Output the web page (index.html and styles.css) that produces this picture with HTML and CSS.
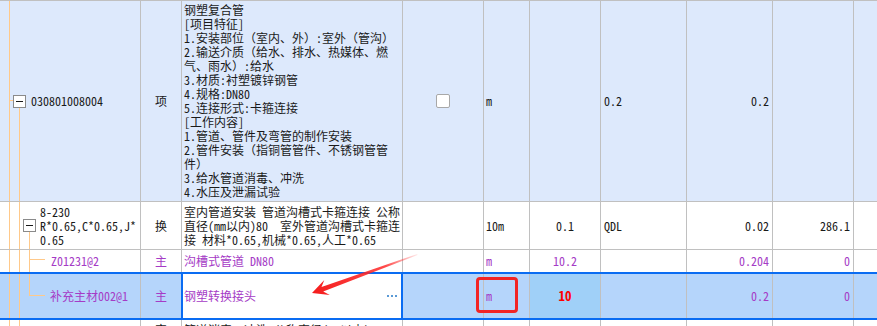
FILE: index.html
```html
<!DOCTYPE html>
<html lang="zh-CN">
<head>
<meta charset="utf-8">
<title>清单</title>
<link rel="stylesheet" href="styles.css">
</head>
<body>
<div class="page">
  <div class="grid">
    <div class="row row1">
      <div class="cell code t1"><span class="tog"></span><span class="codetxt">030801008004</span></div>
      <div class="cell c">项</div>
      <div class="cell desc">钢塑复合管<br>[项目特征]<br>1.安装部位（室内、外）:室外（管沟）<br>2.输送介质（给水、排水、热媒体、燃<br>气、雨水）:给水<br>3.材质:衬塑镀锌钢管<br>4.规格:DN80<br>5.连接形式:卡箍连接<br>[工作内容]<br>1.管道、管件及弯管的制作安装<br>2.管件安装（指铜管管件、不锈钢管管<br>件）<br>3.给水管道消毒、冲洗<br>4.水压及泄漏试验</div>
      <div class="cell c"><span class="chk"></span></div>
      <div class="cell unit">m</div>
      <div class="cell c"></div>
      <div class="cell">0.2</div>
      <div class="cell r">0.2</div>
      <div class="cell"></div>
      <div class="cell last"></div>
    </div>
    <div class="row row2">
      <div class="cell code t2"><span class="tog"></span><span class="codetxt">8-230<br>R*0.65,C*0.65,J*<br>0.65</span></div>
      <div class="cell c">换</div>
      <div class="cell desc">室内管道安装 管道沟槽式卡箍连接 公称<br>直径(mm以内)80　室外管道沟槽式卡箍连<br>接 材料*0.65,机械*0.65,人工*0.65</div>
      <div class="cell"></div>
      <div class="cell unit">10m</div>
      <div class="cell c">0.1</div>
      <div class="cell">QDL</div>
      <div class="cell r">0.02</div>
      <div class="cell r">286.1</div>
      <div class="cell last"></div>
    </div>
    <div class="row row3 purple">
      <div class="cell code t3">Z01231@2</div>
      <div class="cell c">主</div>
      <div class="cell desc">沟槽式管道 DN80</div>
      <div class="cell"></div>
      <div class="cell unit">m</div>
      <div class="cell c">10.2</div>
      <div class="cell"></div>
      <div class="cell r">0.204</div>
      <div class="cell r">0</div>
      <div class="cell last"></div>
    </div>
    <div class="row row4 purple">
      <div class="cell code t4">补充主材002@1</div>
      <div class="cell c before-edit">主</div>
      <div class="cell desc edit"><span>钢塑转换接头</span><span class="dots"></span></div>
      <div class="cell"></div>
      <div class="cell unit marked">m<span class="redbox"></span></div>
      <div class="cell c qsel"><b class="qty">10</b></div>
      <div class="cell"></div>
      <div class="cell r">0.2</div>
      <div class="cell r">0</div>
      <div class="cell last"></div>
    </div>
    <div class="row row5">
      <div class="cell code t5">8-141</div>
      <div class="cell c">定</div>
      <div class="cell desc">管道消毒、冲洗 公称直径(mm以内)100</div>
      <div class="cell"></div>
      <div class="cell unit">100m</div>
      <div class="cell c">0.01</div>
      <div class="cell">QDL</div>
      <div class="cell r">0.002</div>
      <div class="cell r">100.00</div>
      <div class="cell last"></div>
    </div>
  </div>
  <svg class="arrow" width="877" height="326" viewBox="0 0 877 326">
    <defs>
      <linearGradient id="fade" x1="417" y1="254" x2="312" y2="293" gradientUnits="userSpaceOnUse">
        <stop offset="0" stop-color="#ff3030" stop-opacity="0.1"/>
        <stop offset="0.3" stop-color="#ff2a2a" stop-opacity="0.85"/>
        <stop offset="1" stop-color="#f41c1c"/>
      </linearGradient>
    </defs>
    <polygon fill="url(#fade)" points="312,293 324.3,280 321.5,286.9 417.2,254 417.6,255.1 323.2,291.6 329.8,295.1"/>
  </svg>
</div>
</body>
</html>
```
FILE: styles.css
```css
* { box-sizing: border-box; }
html, body { margin: 0; padding: 0; }
body {
  width: 877px;
  height: 326px;
  overflow: hidden;
  background: #fff;
  font-family: "Noto Sans Mono CJK SC", "Noto Sans CJK SC", sans-serif;
  font-size: 12px;
  color: #1a1a1a;
}
.page { position: relative; width: 877px; height: 326px; }
.grid { border-top: 1px solid #c0c0c0; }
.row {
  display: grid;
  grid-template-columns: 141px 41px 221px 81px 46px 71px 86px 86px 81px 1fr;
  border-bottom: 1px solid #c0c0c0;
}
.cell {
  border-right: 1px solid #c0c0c0;
  display: flex;
  align-items: center;
  padding: 0 3px;
  line-height: 14px;
  white-space: nowrap;
  overflow: hidden;
}
.cell.last { border-right: none; }
.r { justify-content: flex-end; }
.c { justify-content: center; }
.desc { padding-left: 2px; }
.unit { padding-left: 2px; }

.row1 { height: 201px; background: #dde9fc; }
.row2 { height: 48px; }
.row3 { height: 22px; border-bottom: none; }
.row4 {
  height: 48px;
  border-top: 2px solid #0a6cf2;
  border-bottom: 2px solid #0a6cf2;
  background: #b5d5fb;
}
.row5 { height: 30px; border-bottom: none; }
.row5 .cell { align-items: flex-start; padding-top: 3px; }

.purple { color: #a53bc6; }

/* tree column */
.code { padding-left: 0; }
.t1 {
  padding-left: 13px;
  background:
    linear-gradient(#ffc98a, #ffc98a) 9px 0 / 1px 100% no-repeat,
    linear-gradient(#ffc98a, #ffc98a) 9px 99px / 5px 1px no-repeat,
    linear-gradient(#ffc98a, #ffc98a) 19px 106px / 1px 100% no-repeat;
}
.t1 .codetxt { margin-left: 5px; }
.t2 {
  padding-left: 23px;
  background:
    linear-gradient(#ffc98a, #ffc98a) 9px 0 / 1px 100% no-repeat,
    linear-gradient(#ffc98a, #ffc98a) 19px 0 / 1px 100% no-repeat,
    linear-gradient(#ffc98a, #ffc98a) 29px 30px / 1px 100% no-repeat;
}
.t2 .codetxt { margin-left: 4px; }
.t3 {
  padding-left: 51px;
  background:
    linear-gradient(#ffc98a, #ffc98a) 9px 0 / 1px 100% no-repeat,
    linear-gradient(#ffc98a, #ffc98a) 19px 0 / 1px 100% no-repeat,
    linear-gradient(#ffc98a, #ffc98a) 29px 0 / 1px 100% no-repeat,
    linear-gradient(#ffc98a, #ffc98a) 29px 9px / 16px 1px no-repeat;
}
.t4 {
  padding-left: 50px;
  background:
    linear-gradient(#ffc98a, #ffc98a) 9px 0 / 1px 100% no-repeat,
    linear-gradient(#ffc98a, #ffc98a) 19px 0 / 1px 100% no-repeat,
    linear-gradient(#ffc98a, #ffc98a) 29px 0 / 1px 22px no-repeat,
    linear-gradient(#ffc98a, #ffc98a) 29px 21px / 16px 1px no-repeat;
}
.row5 .t5 {
  padding-left: 40px;
  background:
    linear-gradient(#ffc98a, #ffc98a) 9px 0 / 1px 100% no-repeat,
    linear-gradient(#ffc98a, #ffc98a) 19px 0 / 1px 100% no-repeat;
}

.tog {
  flex: none;
  position: relative;
  width: 13px;
  height: 13px;
  border: 1px solid #8a8a8a;
  background: #fff;
}
.tog::after {
  content: "";
  position: absolute;
  left: 2px;
  top: 5px;
  width: 7px;
  height: 1px;
  background: #1a1a1a;
}

.chk {
  width: 14px;
  height: 14px;
  border: 1px solid #a8a8a8;
  border-radius: 2px;
  background: #fff;
}

/* selected row */
.before-edit { border-right-color: #0a6cf2; }
.edit {
  background: #fff;
  border-right: none;
  justify-content: space-between;
  padding-right: 6px;
  box-shadow: inset 1px 0 0 #0a6cf2, inset -2px 0 0 #0a6cf2;
}
.dots {
  width: 10px;
  height: 2px;
  background: linear-gradient(to right, #5a9ad6 2px, transparent 2px) 0 0 / 4px 2px repeat-x;
}
.qsel { background: #a0d0f8; }
.qty { color: #ff0000; font-weight: 700; font-size: 13px; }

.marked { position: relative; overflow: visible; }
.redbox {
  position: absolute;
  left: -8px;
  top: 3px;
  width: 42px;
  height: 36px;
  border: 3px solid #f22424;
  border-radius: 4px;
}

.arrow {
  position: absolute;
  left: 0;
  top: 0;
  pointer-events: none;
}
```
